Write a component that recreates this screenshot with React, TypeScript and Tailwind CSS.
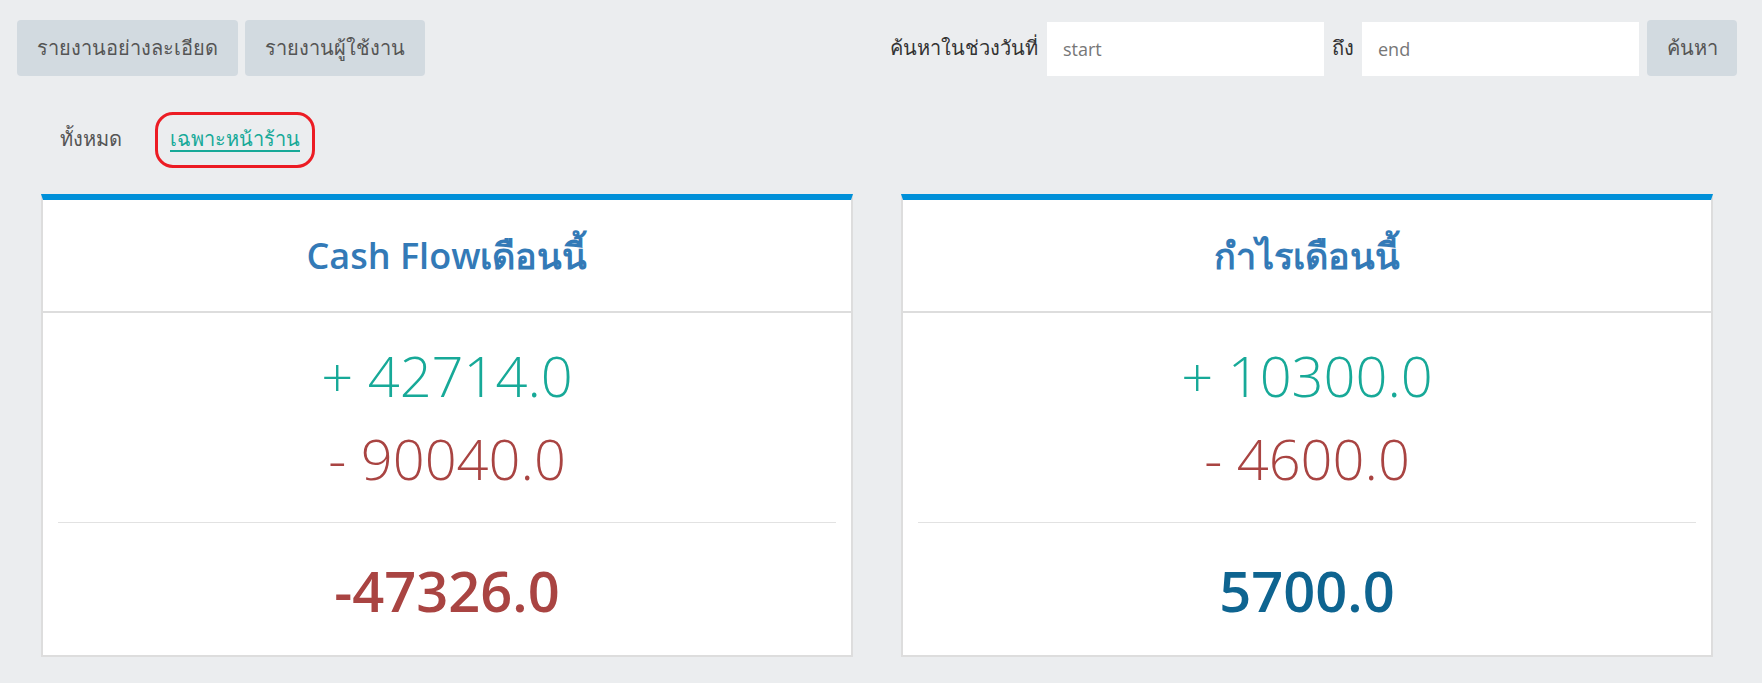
const font = { fontFamily: '"Open Sans", "Noto Sans", "DejaVu Sans", sans-serif' };

type Summary = {
  title: string;
  income: string;
  expense: string;
  total: string;
  totalClass: string;
};

const summaries: Summary[] = [
  { title: 'Cash Flowเดือนนี้', income: '+ 42714.0', expense: '- 90040.0', total: '-47326.0', totalClass: 'text-[#a94442]' },
  { title: 'กำไรเดือนนี้', income: '+ 10300.0', expense: '- 4600.0', total: '5700.0', totalClass: 'text-[#0e6490]' },
];

function SummaryCard({ s }: { s: Summary }) {
  return (
    <div className="w-[812px] bg-white border-2 border-[#dddddd] border-t-[6px] border-t-[#0090d9]">
      <div className="h-[113px] flex items-center justify-center border-b-2 border-[#dddddd]">
        <h2 className="text-[36px] font-semibold text-[#337ab7] leading-none">{s.title}</h2>
      </div>
      <div className="pt-[21px] px-[15px] text-center">
        <div className="text-[56px] font-light leading-[83px] text-[#17a998]">{s.income}</div>
        <div className="text-[56px] font-light leading-[83px] text-[#a94442]">{s.expense}</div>
        <div className="mt-[22px] border-t border-[#e2e2e2]" />
        <div className={`h-[132px] pt-[2px] flex items-center justify-center text-[56px] font-semibold ${s.totalClass}`}>
          {s.total}
        </div>
      </div>
    </div>
  );
}

export default function App() {
  return (
    <div className="min-h-[683px] bg-[#ebedef] text-[#333]" style={font}>
      <div className="flex items-start justify-between pl-[17px] pr-[25px] pt-[20px]">
        <div className="flex gap-[7px]">
          <button className="h-[56px] px-[20px] rounded-[4px] bg-[#d2dae0] text-[20px] text-[#555]">รายงานอย่างละเอียด</button>
          <button className="h-[56px] px-[20px] rounded-[4px] bg-[#d2dae0] text-[20px] text-[#555]">รายงานผู้ใช้งาน</button>
        </div>
        <div className="flex items-center gap-[8px] text-[20px]">
          <span className="mr-[1px]">ค้นหาในช่วงวันที่</span>
          <input placeholder="start" className="w-[277px] h-[54px] mt-[2px] bg-white px-[16px] text-[18px] placeholder:text-[#777] outline-none" />
          <span>ถึง</span>
          <input placeholder="end" className="w-[277px] h-[54px] mt-[2px] bg-white px-[16px] text-[18px] placeholder:text-[#777] outline-none" />
          <button className="h-[56px] w-[90px] rounded-[4px] bg-[#d2dae0] text-[20px] text-[#555]">ค้นหา</button>
        </div>
      </div>

      <div className="flex items-center gap-[48px] pl-[60px] h-[52px] mt-[37px] text-[20px]">
        <span className="text-[#555]">ทั้งหมด</span>
        <span className="relative text-[#17a998] underline underline-offset-4">
          เฉพาะหน้าร้าน
          <span className="absolute left-[-15px] right-[-15px] top-[-12px] bottom-[-14px] border-[3px] border-[#ec1c24] rounded-[18px]" />
        </span>
      </div>

      <div className="flex gap-[48px] pl-[41px] mt-[29px] pb-[27px]">
        {summaries.map((s) => (
          <SummaryCard key={s.title} s={s} />
        ))}
      </div>
    </div>
  );
}
